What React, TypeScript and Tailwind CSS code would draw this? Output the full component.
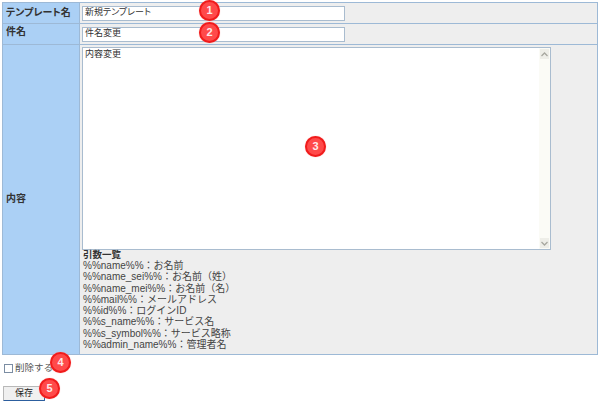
const font = "font-['Liberation_Sans','Noto_Sans_CJK_JP',sans-serif]"

function Badge({ n, className }: { n: number; className: string }) {
  return (
    <div
      className={`absolute flex h-[21px] w-[21px] items-center justify-center rounded-full border-2 border-[#f01c1c] bg-[#ff4a4a] pb-[1px] text-[11px] font-bold leading-none text-[#ffe9e9] shadow-[0_0_1px_#ff9090] ${className}`}
    >
      {n}
    </div>
  )
}

function Label({ children, className = '' }: { children: string; className?: string }) {
  return (
    <div className={`flex w-[77px] shrink-0 border-r border-[#9db9d6] bg-[#abd0f5] pl-[3px] text-[10px] font-bold text-[#333] [font-feature-settings:'palt'] ${className}`}>
      {children}
    </div>
  )
}

function TextBox({ value }: { value: string }) {
  return (
    <div className="flex h-[15px] w-[263px] items-center border border-[#a9bccf] bg-white pl-[2px] text-[9px] text-[#333] [font-feature-settings:'palt']">
      {value}
    </div>
  )
}

const args = [
  '%%name%%：お名前',
  '%%name_sei%%：お名前（姓）',
  '%%name_mei%%：お名前（名）',
  '%%mail%%：メールアドレス',
  '%%id%%：ログインID',
  '%%s_name%%：サービス名',
  '%%s_symbol%%：サービス略称',
  '%%admin_name%%：管理者名',
]

export default function App() {
  return (
    <div className={`relative h-[403px] w-[600px] overflow-hidden bg-white pt-[2px] ${font}`}>
      <div className="mx-[2px] flex h-[353px] w-[596px] flex-col border border-[#9db9d6]">
        <div className="flex h-[21px] border-b border-[#9db9d6]">
          <Label className="items-start pt-[2px]">テンプレート名</Label>
          <div className="flex flex-1 items-center bg-[#eeeeee] pl-[2px]">
            <TextBox value="新規テンプレート" />
          </div>
        </div>
        <div className="flex h-[21px] border-b border-[#9db9d6]">
          <Label className="items-start">件名</Label>
          <div className="flex flex-1 items-center bg-[#eeeeee] pl-[2px]">
            <TextBox value="件名変更" />
          </div>
        </div>
        <div className="flex flex-1">
          <Label className="items-center pb-[2px]">内容</Label>
          <div className="flex-1 bg-[#eeeeee] pl-[2px] pt-[2px]">
            <div className="flex h-[203px] w-[469px] border border-[#a9bccf] bg-white">
              <div className="flex-1 pl-[2px] pt-[1px] text-[9px] leading-[11px] text-[#333]">内容変更</div>
              <div className="flex w-[11px] flex-col justify-between bg-[#fbfbf6] px-[1px] py-[1px]">
                <div className="flex h-[10px] items-center justify-center bg-[#eeeee8]">
                  <svg width="7" height="5" viewBox="0 0 7 5" fill="none" stroke="#a8a8a0" strokeWidth="1.3">
                    <path d="M0.5 4 L3.5 1 L6.5 4" />
                  </svg>
                </div>
                <div className="flex h-[10px] items-center justify-center bg-[#eeeee8]">
                  <svg width="7" height="5" viewBox="0 0 7 5" fill="none" stroke="#a8a8a0" strokeWidth="1.3">
                    <path d="M0.5 1 L3.5 4 L6.5 1" />
                  </svg>
                </div>
              </div>
            </div>
            <div className="pl-[1px] text-[9.5px] font-bold leading-[10px] text-[#333]">引数一覧</div>
            {args.map((a) => (
              <div key={a} className="pl-[1px] text-[10px] leading-[11.3px] text-[#444]">
                {a}
              </div>
            ))}
          </div>
        </div>
      </div>

      <div className="ml-[4px] mt-[7px] flex h-[12px] items-center">
        <div className="h-[9px] w-[9px] border border-[#7b8da3] bg-white" />
        <span className="ml-[2px] text-[9.5px] text-[#555]">削除する</span>
      </div>

      <div className="ml-[3px] mt-[12px] flex h-[15px] w-[42px] items-center justify-center rounded-[1px] border border-[#b8b8b8] border-b-[#2c5e9e] border-r-[#2c5e9e] bg-[#f0f0f0] text-[9px] text-[#222]">
        保存
      </div>

      <Badge n={1} className="left-[199px] top-0" />
      <Badge n={2} className="left-[199px] top-[22px]" />
      <Badge n={3} className="left-[305px] top-[136px]" />
      <Badge n={4} className="left-[50px] top-[352px]" />
      <Badge n={5} className="left-[39px] top-[378px]" />
    </div>
  )
}
